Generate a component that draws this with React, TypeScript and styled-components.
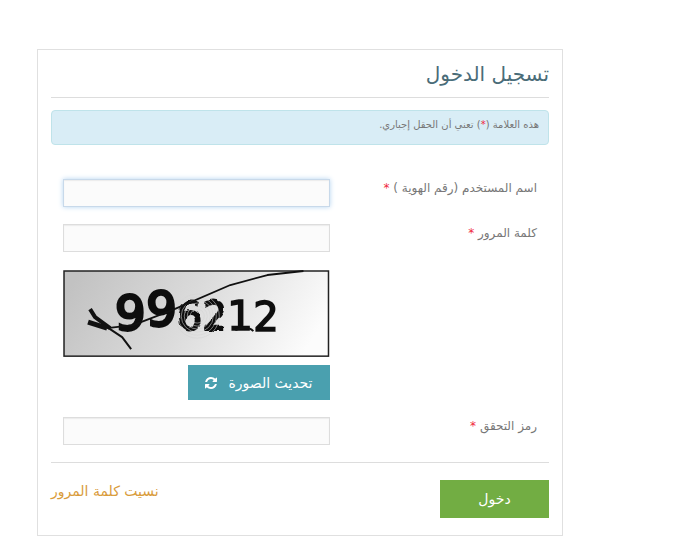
import React from "react";
import styled, { createGlobalStyle } from "styled-components";

const GlobalStyle = createGlobalStyle`
  *, *::before, *::after { box-sizing: border-box; }
  body {
    margin: 0;
    background: #fff;
    color: #777;
    font-family: "DejaVu Sans", sans-serif;
    font-size: 12px;
    line-height: 18px;
  }
`;

const Page = styled.main`
  padding: 49px 115px 0 37px;
`;

const Card = styled.form`
  padding: 10px 13px 17px;
  border: 1px solid #e0e0e0;
`;

const Title = styled.h1`
  margin: 0 0 12px;
  padding-bottom: 9px;
  border-bottom: 1px solid #ddd;
  color: #4a6c78;
  font-size: 20px;
  font-weight: 400;
  line-height: 28px;
`;

const Notice = styled.p`
  margin: 0 0 34px;
  padding: 5px 9px 10px;
  border: 1px solid #bfe3ea;
  border-radius: 4px;
  background: #d9edf6;
  font-size: 10px;
`;

const Required = styled.span`
  color: #f0283c;
`;

const Row = styled.div`
  display: grid;
  grid-template-columns: 5fr 7fr;
  margin-bottom: 17px;
`;

const Label = styled.label`
  padding: 0 12px;
  white-space: nowrap;
`;

const Field = styled.div`
  grid-column: 2;
  display: flex;
  flex-direction: column;
  align-items: flex-start;
  padding: 0 12px;
`;

const TextInput = styled.input`
  width: 100%;
  height: 28px;
  padding: 0 8px;
  border: 1px solid #ddd;
  border-radius: 0;
  outline: none;
  background: #fbfbfb;
  color: #555;
  font: inherit;
  box-shadow: inset 0 1px 1px #ececec;

  &[data-active="true"] {
    border-color: #c8d9ea;
    box-shadow: inset 0 1px 1px #ececec, 0 0 5px #b5d4f0;
  }
`;

const Captcha = styled.svg`
  display: block;
  width: 100%;
  height: auto;
  margin: 1px 0 8px;
`;

const RefreshButton = styled.button`
  display: flex;
  align-items: center;
  gap: 12px;
  height: 35px;
  padding: 0 17px;
  border: 0;
  background: #4aa0af;
  color: #fff;
  font: inherit;
  font-size: 14px;
`;

const RefreshIcon = styled.svg`
  width: 12px;
  height: 14px;
  fill: currentColor;
`;

const Footer = styled.footer`
  display: flex;
  justify-content: space-between;
  align-items: flex-start;
  padding-top: 17px;
  border-top: 1px solid #ddd;
`;

const LoginButton = styled.button`
  min-width: 109px;
  height: 38px;
  border: 0;
  background: #72ad43;
  color: #fff;
  font: inherit;
  font-size: 14px;
`;

const ForgotLink = styled.a`
  padding-top: 2px;
  color: #d99c3c;
  font-size: 14px;
  text-decoration: none;
`;

type TextRowProps = {
  id: string;
  label: string;
  type?: string;
  active?: boolean;
};

function TextRow({ id, label, type = "text", active = false }: TextRowProps) {
  return (
    <Row>
      <Label htmlFor={id}>
        {label} <Required>*</Required>
      </Label>
      <Field>
        <TextInput id={id} name={id} type={type} data-active={active} required />
      </Field>
    </Row>
  );
}

const rippleRadii = [7, 10, 13, 16, 19, 22];

function CaptchaImage() {
  return (
    <Captcha viewBox="0 0 266 87" role="img" aria-label="رمز التحقق">
      <defs>
        <linearGradient id="shade" x1="0" y1="0.3" x2="1" y2="0.5">
          <stop offset="0" stopColor="#c2c2c2" />
          <stop offset="0.5" stopColor="#dcdcdc" />
          <stop offset="1" stopColor="#fcfcfc" />
        </linearGradient>
        <filter id="soft" x="-20%" y="-20%" width="140%" height="140%">
          <feGaussianBlur stdDeviation="0.7" />
        </filter>
        <filter id="ripple" x="-20%" y="-20%" width="140%" height="140%">
          <feTurbulence type="fractalNoise" baseFrequency="0.12" numOctaves="1" seed="4" />
          <feDisplacementMap in="SourceGraphic" scale="5" xChannelSelector="R" yChannelSelector="G" />
          <feGaussianBlur stdDeviation="0.6" />
        </filter>
      </defs>
      <rect x="1" y="1" width="264" height="85" fill="url(#shade)" stroke="#222" strokeWidth="1.5" />
      <g fontFamily="DejaVu Sans" fill="#111" stroke="#111" direction="ltr">
        <g filter="url(#soft)" fontSize="48" strokeWidth="3">
          <text x="52" y="60">9</text>
          <text x="83" y="56">9</text>
        </g>
        <g filter="url(#ripple)" fontSize="39" strokeWidth="2">
          <text x="114" y="60">6</text>
          <text x="139" y="60">2</text>
        </g>
        <g filter="url(#soft)" fontSize="40" strokeWidth="1.6">
          <text x="164" y="60">1</text>
          <text x="190" y="61">2</text>
        </g>
      </g>
      <g fill="none" stroke="#d4d4d4" strokeWidth="0.8" opacity="0.7" filter="url(#soft)">
        {rippleRadii.map((radius) => (
          <circle key={radius} cx="134" cy="46" r={radius} />
        ))}
      </g>
      <g fill="none" stroke="#111" strokeLinejoin="round">
        <path d="M27 39l5 8 15 11" strokeWidth="4" />
        <path d="M25 52l19 6" strokeWidth="5" />
        <path d="M44 57l15 10 9 12" strokeWidth="2" />
        <path d="M44 58l26-3 39-15 58-25 37-10 36-4" strokeWidth="1.8" />
        <path d="M172 60q12-5 18 1" strokeWidth="2" />
      </g>
    </Captcha>
  );
}

export default function App() {
  return (
    <>
      <GlobalStyle />
      <Page dir="rtl" lang="ar">
        <Card onSubmit={(event) => event.preventDefault()}>
          <Title>تسجيل الدخول</Title>
          <Notice>
            هذه العلامة (<Required>*</Required>) تعني أن الحقل إجباري.
          </Notice>
          <TextRow id="username" label="اسم المستخدم (رقم الهوية )" active />
          <TextRow id="password" label="كلمة المرور" type="password" />
          <Row>
            <Field>
              <CaptchaImage />
              <RefreshButton type="button">
                تحديث الصورة
                <RefreshIcon viewBox="0 0 1536 1792" aria-hidden="true">
                  <path d="M1511 1056q0 5-1 7-64 268-268 434.5t-478 166.5q-146 0-282.5-55t-243.5-157l-129 129q-19 19-45 19t-45-19-19-45v-448q0-26 19-45t45-19h448q26 0 45 19t19 45-19 45l-137 137q71 66 161 102t187 36q134 0 250-65t186-179q11-17 53-117 8-23 30-23h192q13 0 22.5 9.5t9.5 22.5zm25-800v448q0 26-19 45t-45 19h-448q-26 0-45-19t-19-45 19-45l138-138q-148-137-349-137-134 0-250 65t-186 179q-11 17-53 117-8 23-30 23h-199q-13 0-22.5-9.5t-9.5-22.5v-7q65-268 270-434.5t480-166.5q146 0 284 55.5t245 156.5l130-129q19-19 45-19t45 19 19 45z" />
                </RefreshIcon>
              </RefreshButton>
            </Field>
          </Row>
          <TextRow id="code" label="رمز التحقق" />
          <Footer>
            <LoginButton type="submit">دخول</LoginButton>
            <ForgotLink href="#forgot">نسيت كلمة المرور</ForgotLink>
          </Footer>
        </Card>
      </Page>
    </>
  );
}
